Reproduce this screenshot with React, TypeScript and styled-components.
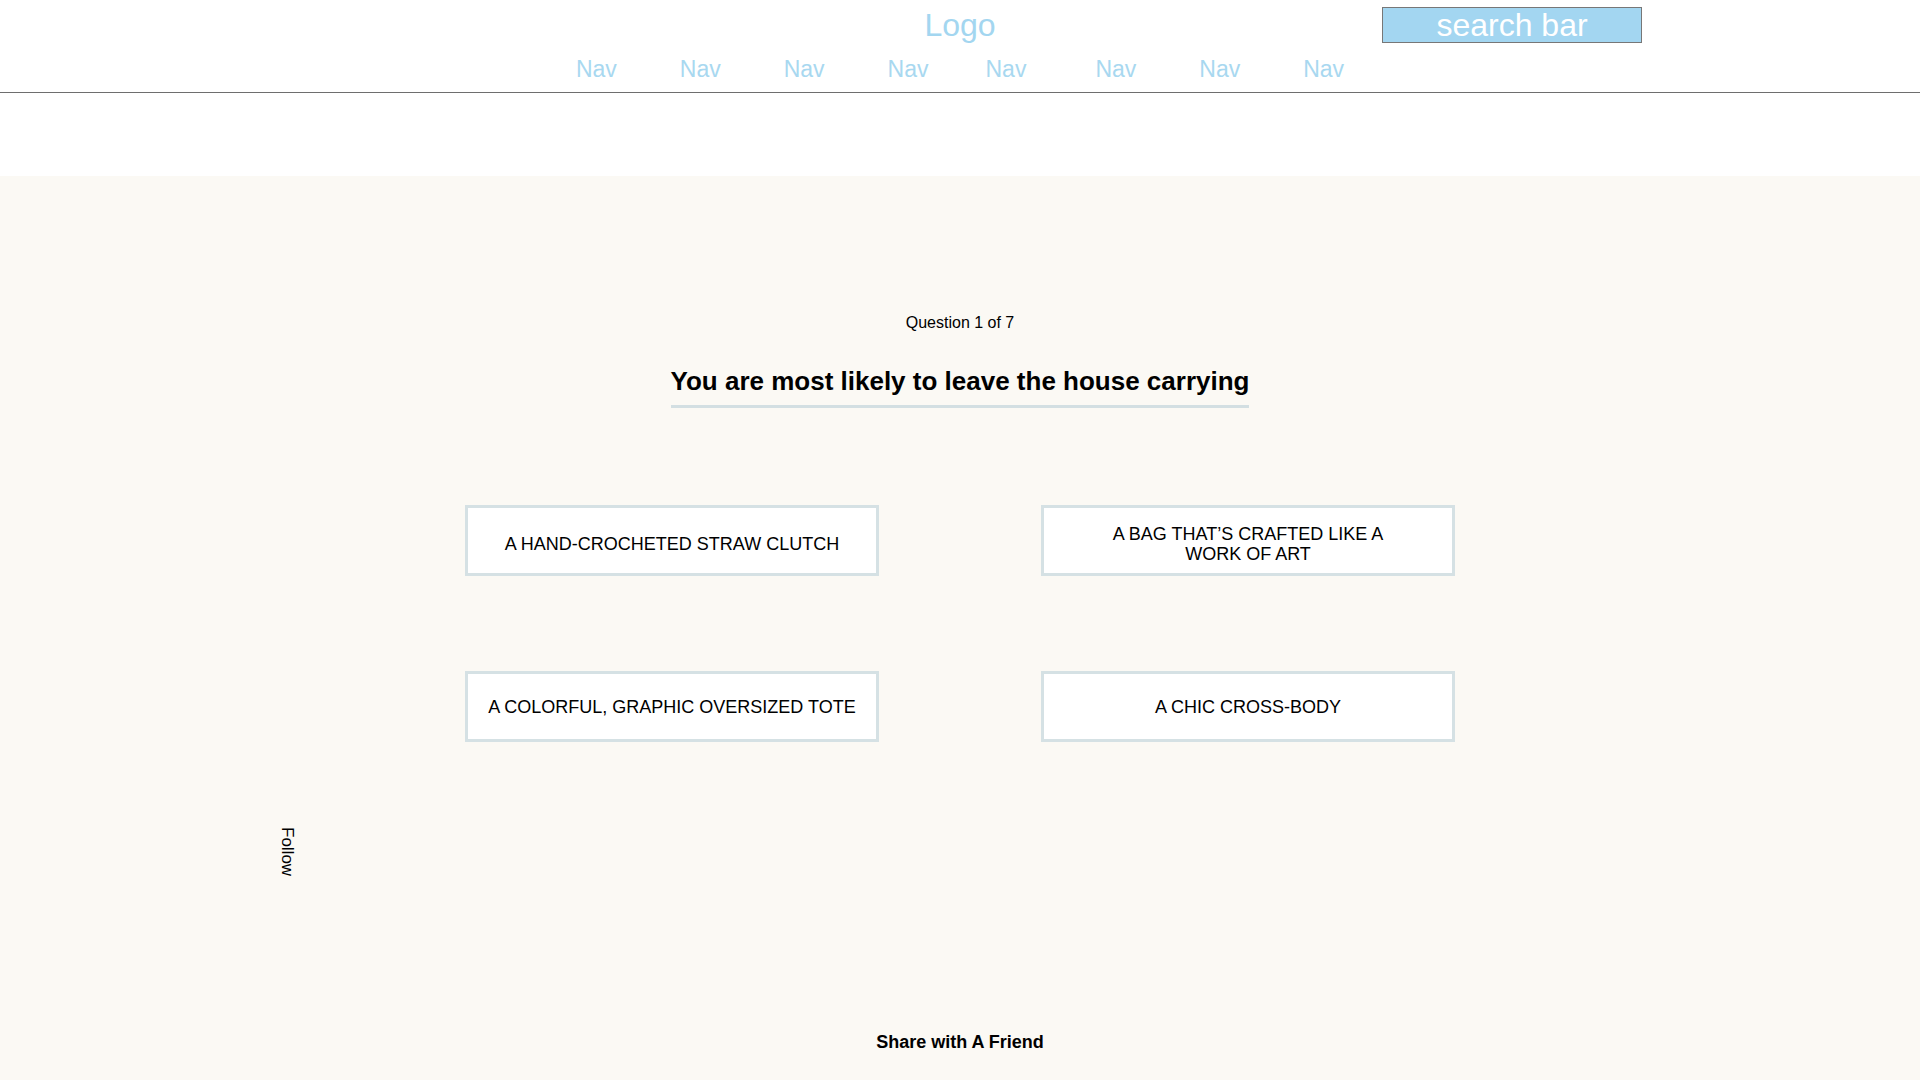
import React from 'react'
import styled, { createGlobalStyle } from 'styled-components'

const GlobalStyle = createGlobalStyle`
  html, body {
    margin: 0;
    padding: 0;
    background: #ffffff;
  }
  body {
    font-family: "Liberation Sans", Arial, Helvetica, sans-serif;
    color: #111111;
  }
  * {
    box-sizing: border-box;
  }
`

const Header = styled.header`
  border-bottom: 1px solid #6e6e6e;
  padding: 7px 0 10px;
`

const TopRow = styled.div`
  display: grid;
  grid-template-columns: 1fr 260px 1fr;
  align-items: center;
  height: 36px;
`

const Logo = styled.div`
  grid-column: 2;
  justify-self: center;
  font-size: 32px;
  line-height: 36px;
  color: #a3d6f0;
`

const SearchBar = styled.div`
  grid-column: 3;
  justify-self: start;
  margin-left: 292px;
  width: 260px;
  height: 36px;
  background: #a3d6f1;
  border: 1px solid #777777;
  color: #ffffff;
  font-size: 32px;
  line-height: 34px;
  text-align: center;
`

const NavRow = styled.nav`
  display: flex;
  justify-content: center;
  gap: 63px;
  margin-top: 13px;
`

const NavItem = styled.a<{ $nudge?: number }>`
  font-size: 23px;
  line-height: 26px;
  color: #a8d8f0;
  text-decoration: none;
  margin-left: ${({ $nudge }) => ($nudge ? `${$nudge}px` : '0')};
  margin-right: ${({ $nudge }) => ($nudge ? `${-$nudge}px` : '0')};
`

const Spacer = styled.div`
  height: 83px;
`

const QuizSection = styled.section`
  position: relative;
  height: 904px;
  background: #fbf9f4;
  display: flex;
  flex-direction: column;
  align-items: center;
  padding: 137px 0 27px;
`

const Counter = styled.div`
  font-size: 16px;
  line-height: 20px;
  color: #000000;
`

const Question = styled.h1`
  margin: 33px 0 0;
  font-size: 26px;
  line-height: 30px;
  font-weight: 700;
  color: #000000;
  padding-bottom: 9px;
  border-bottom: 3px solid #d3dfe2;
`

const Options = styled.div`
  display: grid;
  grid-template-columns: 414px 414px;
  column-gap: 162px;
  row-gap: 95px;
  margin-top: 97px;
`

const Option = styled.button<{ $drop?: boolean }>`
  height: 71px;
  background: #ffffff;
  border: 3px solid #d5e1e4;
  font-family: inherit;
  font-size: 18px;
  line-height: 20px;
  color: #000000;
  text-transform: uppercase;
  white-space: pre-line;
  padding: ${({ $drop }) => ($drop ? '7px 16px 0' : '0 16px')};
  cursor: pointer;
`

const Follow = styled.div`
  position: absolute;
  left: 279px;
  top: 651px;
  writing-mode: vertical-rl;
  font-size: 17px;
  line-height: 17px;
  color: #000000;
`

const Share = styled.div`
  margin-top: auto;
  font-size: 18px;
  line-height: 22px;
  font-weight: 700;
  color: #000000;
`

const answers = [
  'A HAND-CROCHETED STRAW CLUTCH',
  'A BAG THAT’S CRAFTED LIKE A\nWORK OF ART',
  'A COLORFUL, GRAPHIC OVERSIZED TOTE',
  'A CHIC CROSS-BODY',
]

const navNudges = [0, 0, 0, 0, -6, 0, 0, 0]

const App = () => {
  return (
    <>
      <GlobalStyle />
      <Header>
        <TopRow>
          <Logo>Logo</Logo>
          <SearchBar>search bar</SearchBar>
        </TopRow>
        <NavRow>
          {navNudges.map((n, i) => (
            <NavItem key={i} $nudge={n}>
              Nav
            </NavItem>
          ))}
        </NavRow>
      </Header>
      <Spacer />
      <QuizSection>
        <Counter>Question 1 of 7</Counter>
        <Question>You are most likely to leave the house carrying</Question>
        <Options>
          {answers.map((a, i) => (
            <Option key={a} $drop={i < 2}>
              {a}
            </Option>
          ))}
        </Options>
        <Follow>Follow</Follow>
        <Share>Share with A Friend</Share>
      </QuizSection>
    </>
  )
}

export default App
